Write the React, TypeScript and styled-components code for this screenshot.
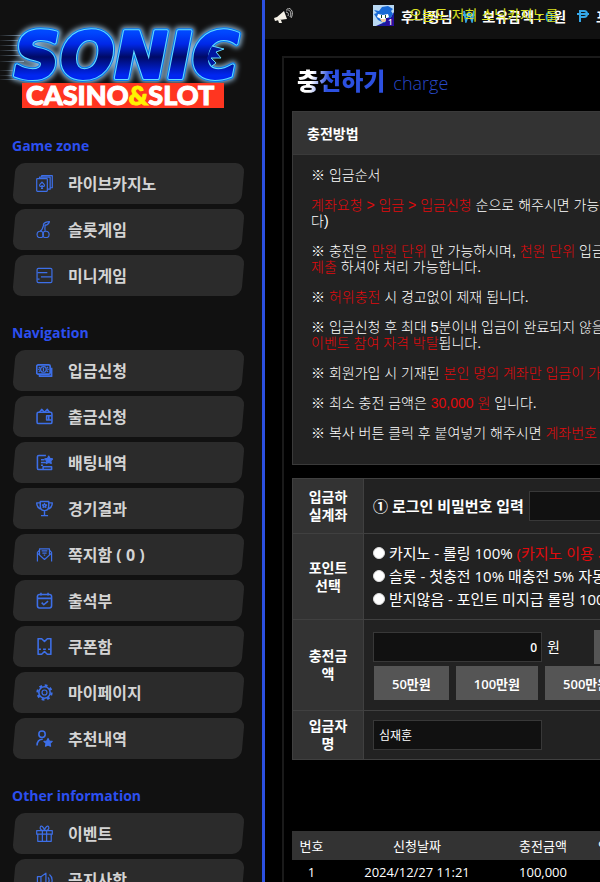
import React from "react";
import styled, { createGlobalStyle } from "styled-components";

const malgun = `"Open Sans", "Noto Sans CJK KR", sans-serif`;
const gulim = `"Liberation Sans", "Noto Sans CJK KR", sans-serif`;

const GlobalStyle = createGlobalStyle`
  * { box-sizing: border-box; }
  body { margin: 0; background: #000; color: #fff; font-family: ${malgun}; overflow: hidden; }
  button, input { font-family: inherit; }
`;

const Shell = styled.div`
  display: flex;
  height: 100vh;
  overflow: hidden;
`;

const Sidebar = styled.aside`
  flex: 0 0 265px;
  background: #111;
  border-right: 3px solid #2c50e0;
  overflow: hidden;
`;

const LogoLink = styled.a`
  display: block;
  height: 136px;
  svg { display: block; }
`;

const Group = styled.nav`
  margin-bottom: 27px;
`;

const GroupTitle = styled.h2`
  margin: 0;
  padding: 0 12px 7px;
  font-size: 14px;
  line-height: 20px;
  font-weight: 700;
  color: #2c4ff0;
`;

const MenuList = styled.ul`
  display: grid;
  gap: 5px;
  margin: 0;
  padding: 0 19px 0 14px;
  list-style: none;
`;

const MenuLink = styled.a`
  position: relative;
  display: flex;
  align-items: center;
  gap: 15px;
  height: 41px;
  padding-left: 22px;
  color: #d4d4d4;
  font-size: 16px;
  line-height: 20px;
  font-weight: 700;
  text-decoration: none;
  white-space: nowrap;
  &::before {
    content: "";
    position: absolute;
    inset: 0;
    border-radius: 9px;
    background: #2b2b2b;
    transform: skewX(-5deg);
  }
  svg, span { position: relative; }
`;

const Main = styled.main`
  flex: 1;
  min-width: 0;
  overflow: hidden;
`;

const TopBar = styled.header`
  position: relative;
  display: flex;
  align-items: center;
  height: 39px;
  padding: 0 0 8px 9px;
  background: #111;
  font-size: 14px;
  font-weight: 600;
  white-space: nowrap;
  svg { flex: none; }
`;

const Account = styled.div`
  display: flex;
  align-items: center;
  margin-left: 80px;
`;

const UserName = styled.span`
  margin: 0 10px 0 7px;
`;

const Balance = styled.span`
  margin: 0 11px 0 8px;
  b { color: #35a7e8; font-weight: 600; }
`;

const PointLabel = styled.span`
  margin-left: 7px;
`;

const Marquee = styled.p`
  position: absolute;
  left: 144px;
  top: 6px;
  margin: 0;
  font: 400 14px/18px ${gulim};
  color: #d9e021;
`;

const Panel = styled.section`
  min-width: 960px;
  margin: 17px 17px 0;
  padding: 0 8px 40px;
  border: 2px solid #1a1a1a;
`;

const PageTitle = styled.h1`
  display: flex;
  align-items: baseline;
  gap: 8px;
  margin: 0;
  padding: 5px 5px 10px;
  font-size: 24px;
  line-height: 36px;
  strong {
    background: linear-gradient(100deg, #fff 18%, #2c50e0 36%);
    background-clip: text;
    color: transparent;
  }
  small { font-size: 18px; font-weight: 300; color: #2848c8; }
`;

const Notice = styled.section`
  margin-bottom: 13px;
  border: 1px solid #3a3a3a;
  background: #222;
`;

const NoticeHead = styled.h2`
  margin: 0;
  padding: 12px 14px 10px;
  border-bottom: 1px solid #3a3a3a;
  background: #333;
  font-size: 14px;
  line-height: 20px;
`;

const NoticeBody = styled.div`
  display: grid;
  gap: 14px;
  padding: 12px 18px 23px;
  font: 300 14px/16px ${gulim};
  white-space: nowrap;
  p { margin: 0; }
`;

const Red = styled.span`
  color: #e00a0d;
`;

const FormTable = styled.table`
  width: 100%;
  border-collapse: collapse;
  background: #222;
  font-size: 14px;
  line-height: 18px;
  white-space: nowrap;
  th, td { border: 1px solid #404040; }
  th { width: 71px; padding: 0; background: #333; font-weight: 600; }
  td { padding: 9px; }
`;

const FieldRow = styled.div`
  display: flex;
  align-items: center;
  gap: 5px;
  height: 36px;
`;

const FieldLabel = styled.label`
  font-size: 15px;
  font-weight: 600;
`;

const TextBox = styled.input<{ $numeric?: boolean }>`
  width: 169px;
  height: 30px;
  padding: 0 ${p => (p.$numeric ? 4 : 5)}px;
  border: 1px solid #383838;
  border-radius: 0;
  background: #111;
  color: #fff;
  font-size: 12px;
  font-weight: ${p => (p.$numeric ? 600 : 400)};
  text-align: ${p => (p.$numeric ? "right" : "left")};
  outline: none;
`;

const Options = styled.div`
  display: grid;
  gap: 5px;
  padding: 1px 0 2px;
  font-size: 15px;
`;

const Option = styled.label`
  display: flex;
  align-items: center;
  gap: 4px;
  input {
    appearance: none;
    width: 12px;
    height: 12px;
    margin: 0;
    border: 1px solid #ddd;
    border-radius: 50%;
    background: #fff;
  }
`;

const AmountButton = styled.button`
  height: 34px;
  padding: 0 18px;
  border: 0;
  background: #555;
  color: #fff;
  font-size: 13px;
  font-weight: 600;
`;

const ButtonRow = styled.div`
  display: flex;
  gap: 7px;
  padding: 1px 0 1px 1px;
`;

const CopyButton = styled(AmountButton)`
  margin-left: 29px;
`;

const History = styled.table`
  width: 100%;
  margin-top: 71px;
  border-collapse: collapse;
  table-layout: fixed;
  font-size: 13px;
  line-height: 18px;
  text-align: center;
  white-space: nowrap;
  th { height: 29px; padding: 0; background: #333; font-weight: 400; }
  td { height: 24px; padding: 0; }
`;

const glyphs: Record<string, React.ReactNode> = {
  cards: <><rect x="1" y="5" width="15" height="18" rx="1" /><path d="M5 5V3h15v17h-4M8 3V1h15v17h-3" /><path d="M8.500 10c-1 2-4 2.500-3.500 5 .5 1.500 2.500 1.500 3.500 0 1 1.500 3 1.500 3.500 0 .5-2.500-2.500-3-3.500-5zm0 5v4M7 19h3" /></>,
  cherry: <><circle cx="6" cy="19" r="4.500" /><circle cx="14" cy="19" r="4.500" /><path d="M6 14.500C8 13 10 9 11 5M13 14c-1-4 0-7 0-9M10 5c2-3 5-4 9-4-1 3-3 5-7 5" /></>,
  mini: <><rect x="1.500" y="2" width="21" height="20" rx="2" /><path d="M2 8h14M7 14h15M2 17h3" /></>,
  money: <><rect x="1" y="4" width="19" height="13" rx="2" strokeWidth="2.400" /><path d="M22 8v12H5v-3" strokeWidth="2.400" /><circle cx="10.500" cy="10.500" r="4" /><path d="M4 7l2 2M17 7l-2 2M4 14l2-2M17 14l-2-2M10.500 8v5M3 10.500h2M16 10.500h2" /></>,
  wallet: <><rect x="1.500" y="6" width="21" height="16" rx="2" strokeWidth="2.200" /><path d="M5 6l3-4 4 4 4-4 3 4M22 11h-7v6h7M18 12v4" strokeWidth="2.200" /></>,
  bets: <><path d="M14 2H4Q2 2 2 4v16q0 2 2 2h18v-4H10v4M7 8h5M7 12h7M7 16h3" strokeWidth="2.200" /><path d="M18 3l1.800 3.300 3.700.7-2.600 2.700.6 3.800L18 12l-3.500 1.500.6-3.800L12.500 7l3.700-.7z" fill="currentColor" /></>,
  trophy: <><path d="M6 2h12v6c0 4-2 7-6 7S6 12 6 8zM6 4H1c0 5 2 8 7 9M18 4h5c0 5-2 8-7 9M12 15v7M7 22h10" strokeWidth="2" /><path d="M12 5l1 2h2l-1.500 1.500.5 2-2-1-2 1 .5-2L9 7h2z" /></>,
  mail: <><path d="M2 22V9l3-3M22 22V9l-3-3M5 12V4h14v8M2 10l10 9 10-9M8 7h8M9 10h6M11 13h2" /></>,
  calendar: <><rect x="2" y="3.500" width="20" height="19" rx="3" strokeWidth="2.200" /><path d="M2 9h20M7 1v4M17 1v4M8 15l3 3 6-5" strokeWidth="2.200" /></>,
  coupon: <><path d="M3 1h5l4 4 4-4h5v22h-5l-4-4-4 4H3z" strokeWidth="2.200" /><path d="M4 16h3M10 16h4M17 16h3" strokeWidth="2.200" /></>,
  gear: <><circle cx="12" cy="12" r="8" strokeWidth="2.200" /><circle cx="12" cy="12" r="10" strokeWidth="3" strokeDasharray="3.927 3.927" /><circle cx="12" cy="12" r="3.500" /></>,
  friend: <><circle cx="8.500" cy="6" r="4.500" strokeWidth="2.200" /><path d="M1.500 22c0-6 3-9 8-9" strokeWidth="2.200" /><path d="M17 12l1.800 3.500 4 .6-3 2.800.8 4-3.600-1.900-3.600 1.900.8-4-3-2.800 4-.6z" fill="currentColor" /></>,
  gift: <><path d="M1 8h22v5H1zM2.500 13v10h19V13M9 8v15M15 8v15M12 8C8 8 5 6 6 3s5-1 6 5c1-6 5-8 6-5s-2 5-6 5z" /></>,
  speaker: <><path d="M2 8h5v10H2zM7 8l7-5v20l-7-5M17 9c2 2 2 6 0 8M19 5c5 4 5 12 0 16" /></>,
};

const Glyph = ({ name }: { name: string }) => (
  <svg width="17" height="17" viewBox="0 0 24 24" fill="none" stroke="currentColor" color="#3d6fe8" strokeWidth="1.700" strokeLinejoin="round" aria-hidden="true">
    {glyphs[name]}
  </svg>
);

const menus = [
  { title: "Game zone", items: [["cards", "라이브카지노"], ["cherry", "슬롯게임"], ["mini", "미니게임"]] },
  {
    title: "Navigation",
    items: [
      ["money", "입금신청"], ["wallet", "출금신청"], ["bets", "배팅내역"], ["trophy", "경기결과"], ["mail", "쪽지함 ( 0 )"],
      ["calendar", "출석부"], ["coupon", "쿠폰함"], ["gear", "마이페이지"], ["friend", "추천내역"],
    ],
  },
  { title: "Other information", items: [["gift", "이벤트"], ["speaker", "공지사항"]] },
];

const Logo = () => (
  <svg width="262" height="120" viewBox="0 0 262 120" role="img" aria-label="Sonic Casino & Slot">
    <defs>
      <linearGradient id="face" gradientUnits="userSpaceOnUse" x1="0" y1="32" x2="0" y2="80">
        <stop offset="0" stopColor="#0048ff" />
        <stop offset="0.250" stopColor="#0028e8" />
        <stop offset="0.520" stopColor="#000a66" />
        <stop offset="0.900" stopColor="#0026f0" />
      </linearGradient>
      <linearGradient id="speed" x1="0" x2="1">
        <stop offset="0" stopColor="#7d8fa0" stopOpacity="0.100" />
        <stop offset="1" stopColor="#7d9fc0" />
      </linearGradient>
      <filter id="glow" x="-10%" y="-30%" width="120%" height="160%">
        <feGaussianBlur stdDeviation="2.500" />
      </filter>
    </defs>
    <g fill="url(#speed)">
      {[35, 40, 45, 50, 55, 61, 70, 75, 79].map(y => <rect key={y} x="0" y={y} width="24" height="1" />)}
    </g>
    <g fontFamily="DejaVu Sans" fontWeight="700" fontStyle="italic" fontSize="64" strokeLinejoin="round">
      <text x="14" y="78" fill="#8fb4d0" stroke="#8fb4d0" strokeWidth="9" filter="url(#glow)">SONIC</text>
      <text x="14" y="78" fill="#0878ee" stroke="#0878ee" strokeWidth="6">SONIC</text>
      <text x="14" y="78" fill="#62dcff" stroke="#62dcff" strokeWidth="4">SONIC</text>
      <text x="14" y="78" fill="url(#face)" stroke="url(#face)" strokeWidth="2">SONIC</text>
    </g>
    <path d="M212 46l12 3-8 3 5 6-10 0 5 5-4 3-5-8z" fill="#0016a0" />
    <path d="M212 46l12 3-8 3 5 6-10 0 5 5-4 3" fill="none" stroke="#62dcff" />
    <rect x="22" y="83" width="202" height="25" fill="#ff3520" />
    <text x="26" y="105" fill="#fff" stroke="#fff" fontFamily="Lato" fontWeight="900" fontSize="27">
      CASINO<tspan fill="#fff200" stroke="#fff200">&amp;</tspan>SLOT
    </text>
  </svg>
);

const Megaphone = () => (
  <svg width="19" height="16" viewBox="0 0 19 16" fill="none" aria-hidden="true">
    <path d="M0 10l3-1 7-6 3 8-8 1-4 1zM4 12l3 0 1 3H5z" fill="#f4f0e6" />
    <path d="M12 4c2 0 3 2 2 4M12 2c4-1 6 3 4 7M13 0c5 0 7 5 4 10" stroke="#bbb" />
  </svg>
);

const Avatar = () => (
  <svg width="21" height="21" viewBox="0 0 21 21" role="img" aria-label="레벨 1">
    <rect width="21" height="21" fill="#1b1a9c" />
    <path d="M0 0h21v7l-3 5-6 5-9 4H0z" fill="#b9d8f2" />
    <path d="M1 5l5 1 3-4 6-1 5 3-2 2 2 3-4 6-5 3-6-3-4-6 3-1z" fill="#1769d6" />
    <path d="M5 9l5 1 5-1 1 3-4 2H8l-4-2z" fill="#fff" />
    <path d="M8.500 10v3M12.500 10v3" stroke="#0a4b32" />
    <path d="M7 14h7l-2 3H9z" fill="#f0c9a0" />
    <rect x="13" y="13" width="8" height="8" fill="#2a0f9e" />
    <text x="15" y="20" fontFamily="Open Sans" fontSize="8" fill="#fff">1</text>
  </svg>
);

const CoinMark = ({ kind }: { kind: "won" | "point" }) => (
  <svg width="12" height="14" viewBox="0 0 12 14" fill="none" stroke="#35a7e8" strokeWidth="2" aria-hidden="true">
    {kind === "won" ? <path d="M1 2l2 10 3-8 3 8 2-10M0 6h12" /> : <path d="M3 13V2h4c4 0 4 6 0 6H3M0 5h12" />}
  </svg>
);

export default function App() {
  return (
    <>
      <GlobalStyle />
      <Shell>
        <Sidebar>
          <LogoLink href="#"><Logo /></LogoLink>
          {menus.map(menu => (
            <Group key={menu.title} aria-label={menu.title}>
              <GroupTitle>{menu.title}</GroupTitle>
              <MenuList>
                {menu.items.map(([icon, label]) => (
                  <li key={label}>
                    <MenuLink href="#"><Glyph name={icon} /><span>{label}</span></MenuLink>
                  </li>
                ))}
              </MenuList>
            </Group>
          ))}
        </Sidebar>
        <Main>
          <TopBar>
            <Megaphone />
            <Account>
              <Avatar />
              <UserName>후니짱님</UserName>
              <CoinMark kind="won" />
              <Balance>보유금액 : <b>0</b>원</Balance>
              <CoinMark kind="point" />
              <PointLabel>포인트</PointLabel>
            </Account>
            <Marquee>오늘도 저희 소닉카지노를</Marquee>
          </TopBar>
          <Panel>
            <PageTitle><strong>충전하기</strong><small>charge</small></PageTitle>
            <Notice>
              <NoticeHead>충전방법</NoticeHead>
              <NoticeBody>
                <p>※ 입금순서</p>
                <p><Red>계좌요청 &gt; 입금 &gt; 입금신청</Red> 순으로 해주시면 가능합니<br />다)</p>
                <p>※ 충전은 <Red>만원 단위</Red> 만 가능하시며, <Red>천원 단위</Red> 입금<br /><Red>제출</Red> 하셔야 처리 가능합니다.</p>
                <p>※ <Red>허위충전</Red> 시 경고없이 제재 됩니다.</p>
                <p>※ 입금신청 후 최대 5분이내 입금이 완료되지 않을<br /><Red>이벤트 참여 자격 박탈</Red>됩니다.</p>
                <p>※ 회원가입 시 기재된 <Red>본인 명의 계좌만 입금이 가능</Red></p>
                <p>※ 최소 충전 금액은 <Red>30,000 원</Red> 입니다.</p>
                <p>※ 복사 버튼 클릭 후 붙여넣기 해주시면 <Red>계좌번호</Red></p>
              </NoticeBody>
            </Notice>
            <FormTable>
              <tbody>
                <tr>
                  <th scope="row">입금하<br />실계좌</th>
                  <td>
                    <FieldRow>
                      <FieldLabel htmlFor="password">① 로그인 비밀번호 입력</FieldLabel>
                      <TextBox id="password" type="password" />
                    </FieldRow>
                  </td>
                </tr>
                <tr>
                  <th scope="row">포인트<br />선택</th>
                  <td>
                    <Options>
                      <Option><input type="radio" name="point" /><span>카지노 - 롤링 100% <Red>(카지노 이용 시)</Red></span></Option>
                      <Option><input type="radio" name="point" /><span>슬롯 - 첫충전 10% 매충전 5% 자동</span></Option>
                      <Option><input type="radio" name="point" /><span>받지않음 - 포인트 미지급 롤링 100%</span></Option>
                    </Options>
                  </td>
                </tr>
                <tr>
                  <th scope="row">충전금<br />액</th>
                  <td>
                    <FieldRow>
                      <TextBox id="amount" $numeric defaultValue="0" aria-label="충전금액" />
                      <label htmlFor="amount">원</label>
                      <CopyButton type="button">정정</CopyButton>
                    </FieldRow>
                    <ButtonRow>
                      <AmountButton type="button">50만원</AmountButton>
                      <AmountButton type="button">100만원</AmountButton>
                      <AmountButton type="button">500만원</AmountButton>
                    </ButtonRow>
                  </td>
                </tr>
                <tr>
                  <th scope="row">입금자<br />명</th>
                  <td><TextBox defaultValue="심재훈" aria-label="입금자명" /></td>
                </tr>
              </tbody>
            </FormTable>
            <History>
              <colgroup>
                <col width="39" /><col width="172" /><col width="80" /><col width="78" /><col />
              </colgroup>
              <thead>
                <tr><th>번호</th><th>신청날짜</th><th>충전금액</th><th>입금자명</th><th /></tr>
              </thead>
              <tbody>
                <tr><td>1</td><td>2024/12/27 11:21</td><td>100,000</td><td /><td /></tr>
              </tbody>
            </History>
          </Panel>
        </Main>
      </Shell>
    </>
  );
}
